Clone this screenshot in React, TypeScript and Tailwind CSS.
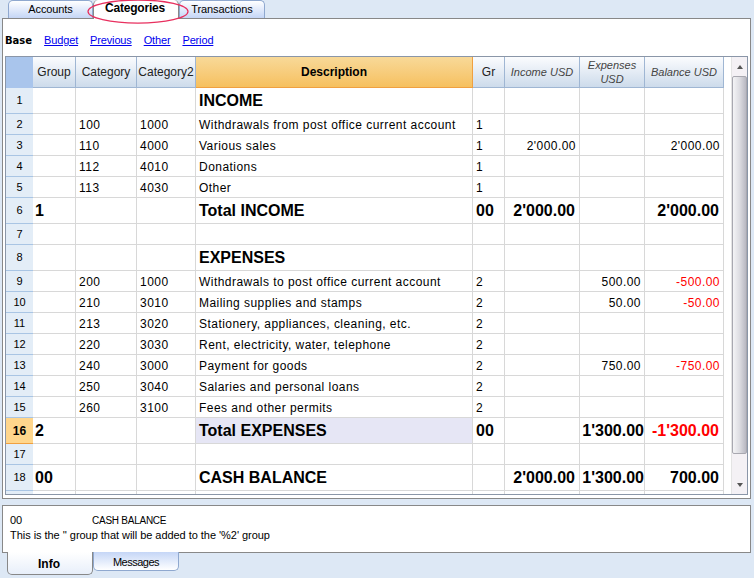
const widths = "w-[43px] w-[61px] w-[59px] w-[277px] w-[32px] w-[75px] w-[65px] w-[79px]".split(" ");

type Row = { n: number; h: string; big?: boolean; cells: string[]; red?: boolean; sel?: boolean };

const rows: Row[] = [
  { n: 1, h: "h-[26px]", big: true, cells: ["", "", "", "INCOME", "", "", "", ""] },
  { n: 2, h: "h-[21px]", cells: ["", "100", "1000", "Withdrawals from post office current account", "1", "", "", ""] },
  { n: 3, h: "h-[21px]", cells: ["", "110", "4000", "Various sales", "1", "2'000.00", "", "2'000.00"] },
  { n: 4, h: "h-[21px]", cells: ["", "112", "4010", "Donations", "1", "", "", ""] },
  { n: 5, h: "h-[21px]", cells: ["", "113", "4030", "Other", "1", "", "", ""] },
  { n: 6, h: "h-[26px]", big: true, cells: ["1", "", "", "Total INCOME", "00", "2'000.00", "", "2'000.00"] },
  { n: 7, h: "h-[21px]", cells: ["", "", "", "", "", "", "", ""] },
  { n: 8, h: "h-[26px]", big: true, cells: ["", "", "", "EXPENSES", "", "", "", ""] },
  { n: 9, h: "h-[21px]", red: true, cells: ["", "200", "1000", "Withdrawals to post office current account", "2", "", "500.00", "-500.00"] },
  { n: 10, h: "h-[21px]", red: true, cells: ["", "210", "3010", "Mailing supplies and stamps", "2", "", "50.00", "-50.00"] },
  { n: 11, h: "h-[21px]", cells: ["", "213", "3020", "Stationery, appliances, cleaning, etc.", "2", "", "", ""] },
  { n: 12, h: "h-[21px]", cells: ["", "220", "3030", "Rent, electricity, water, telephone", "2", "", "", ""] },
  { n: 13, h: "h-[21px]", red: true, cells: ["", "240", "3000", "Payment for goods", "2", "", "750.00", "-750.00"] },
  { n: 14, h: "h-[21px]", cells: ["", "250", "3040", "Salaries and personal loans", "2", "", "", ""] },
  { n: 15, h: "h-[21px]", cells: ["", "260", "3100", "Fees and other permits", "2", "", "", ""] },
  { n: 16, h: "h-[26px]", big: true, red: true, sel: true, cells: ["2", "", "", "Total EXPENSES", "00", "", "1'300.00", "-1'300.00"] },
  { n: 17, h: "h-[21px]", cells: ["", "", "", "", "", "", "", ""] },
  { n: 18, h: "h-[26px]", big: true, cells: ["00", "", "", "CASH BALANCE", "", "2'000.00", "1'300.00", "700.00"] },
];

const headers = ["Group", "Category", "Category2"];

function cellPadding(big: boolean | undefined, i: number) {
  if (!big) return "px-[3px] pt-[2px]";
  if (i === 0) return "pl-[2px] pr-[3px]";
  if (i === 5 || i === 7) return "pl-[3px] pr-[4px]";
  if (i === 6) return "pl-[3px] pr-0";
  return "px-[3px]";
}

function GridRow({ row }: { row: Row }) {
  return (
    <div className={`flex ${row.h}`}>
      <div
        className={`w-[27px] shrink-0 flex items-center justify-center border-b text-[11px] ${
          row.sel ? "bg-[#ffd68c] border-[#f0a040] font-bold text-[12px]" : "bg-[#e3edf7] border-[#a9c5e4]"
        }`}
      >
        {row.n}
      </div>
      {row.cells.map((c, i) => {
        const right = i >= 5;
        return (
          <div
            key={i}
            className={`${widths[i]} shrink-0 flex items-center ${cellPadding(row.big, i)} border-r border-b border-[#d8d8d8] whitespace-nowrap overflow-hidden ${
              right ? "justify-end" : ""
            } ${row.big ? "text-[16px] font-bold" : "text-[12px] tracking-[0.46px]"} ${
              row.red && i === 7 ? "text-[#ff0000]" : ""
            } ${row.sel && i === 3 ? "bg-[#e6e6f5]" : ""}`}
          >
            {c}
          </div>
        );
      })}
    </div>
  );
}

function Scrollbar() {
  return (
    <div className="ml-[7px] w-[17px] flex flex-col bg-[#f4f1f5] border-l border-[#e4e4e4]">
      <div className="h-[19px] flex items-center justify-center">
        <div className="border-x-[3px] border-x-transparent border-b-[4px] border-b-[#555]" />
      </div>
      <div className="h-[378px] rounded-[2px] border border-[#a8a8b0] bg-gradient-to-r from-[#f4f4f6] via-[#dddde2] to-[#b8b8c2]" />
      <div className="flex-1 flex items-end justify-center pb-[7px]">
        <div className="border-x-[3px] border-x-transparent border-t-[4px] border-t-[#555]" />
      </div>
    </div>
  );
}

export default function App() {
  return (
    <div className="relative w-[754px] h-[578px] overflow-hidden bg-[#dde8f5] text-black font-['Liberation_Sans',Arial,sans-serif]">
      {/* top tabs */}
      <div className="flex h-[18px] pl-[8px] text-[11px]">
        <div className="w-[85px] border border-b-0 border-[#8fa8cf] rounded-t-[5px] bg-gradient-to-b from-[#ffffff] to-[#c5d6f6] flex items-center justify-center tracking-[-0.1px]">
          Accounts
        </div>
        <div className="w-[86px] h-[19px] z-10 border-x border-[#888] rounded-t-[5px] bg-white flex items-start justify-center font-bold text-[12px] tracking-[-0.2px] leading-[16px] pr-[2px]">
          Categories
        </div>
        <div className="w-[86px] border border-b-0 border-[#8fa8cf] rounded-t-[5px] bg-gradient-to-b from-[#ffffff] to-[#c5d6f6] flex items-center justify-center tracking-[-0.1px]">
          Transactions
        </div>
      </div>
      <svg className="absolute left-[87px] top-[-3px] z-20" width="103" height="30" viewBox="0 0 103 30">
        <ellipse cx="51" cy="14.5" rx="50" ry="11.5" fill="none" stroke="#e8305f" strokeWidth="1.25" />
      </svg>

      {/* main panel */}
      <div className="ml-[2px] w-[749px] h-[481px] border border-[#888] bg-white pl-[2px] flex flex-col">
        <div className="h-[37px] flex items-center gap-[12px] text-[11px] pt-[5px]">
          <span className="font-bold font-['DejaVu_Sans',sans-serif] text-[10px]">Base</span>
          {["Budget", "Previous", "Other", "Period"].map((l) => (
            <a key={l} href="#" className="text-[#0000ee] underline tracking-[-0.15px]">
              {l}
            </a>
          ))}
        </div>

        <div className="w-[743px] h-[439px] border border-[#8a96a8] flex overflow-hidden">
          <div className="w-[718px] shrink-0">
            {/* header row */}
            <div className="flex h-[31px] text-[12px] text-[#222]">
              <div className="w-[27px] shrink-0 bg-[#a9c5ec]" />
              {headers.map((h, i) => (
                <div
                  key={h}
                  className={`${widths[i]} shrink-0 border-r border-b border-[#9fb6d3] bg-gradient-to-b from-[#fbfcfe] to-[#cddbeb] flex items-center justify-center whitespace-nowrap`}
                >
                  {h}
                </div>
              ))}
              <div className="w-[277px] shrink-0 border-r border-b border-[#f0a040] bg-gradient-to-b from-[#f8d998] to-[#f6c05e] flex items-center justify-center font-bold text-black">
                Description
              </div>
              <div className="w-[32px] shrink-0 border-r border-b border-[#9fb6d3] bg-gradient-to-b from-[#fbfcfe] to-[#cddbeb] flex items-center justify-center">
                Gr
              </div>
              {["Income USD", "Expenses USD", "Balance USD"].map((h, i) => (
                <div
                  key={h}
                  className={`${widths[i + 5]} shrink-0 px-[2px] border-r border-b border-[#9fb6d3] bg-gradient-to-b from-[#fbfcfe] to-[#cddbeb] flex items-center justify-center text-center italic text-[11px] leading-[14px] text-[#444]`}
                >
                  {h}
                </div>
              ))}
            </div>
            {rows.map((r) => (
              <GridRow key={r.n} row={r} />
            ))}
            {/* cut off next row */}
            <div className="flex h-[4px]">
              <div className="w-[27px] shrink-0 bg-[#e3edf7]" />
              {widths.map((w, i) => (
                <div key={i} className={`${w} shrink-0 border-r border-[#d8d8d8]`} />
              ))}
            </div>
          </div>
          <Scrollbar />
        </div>
      </div>

      {/* info panel */}
      <div className="mt-[6px] ml-[2px] w-[749px] h-[48px] border border-[#888] bg-white pt-[7px] pl-[7px] text-[11px] leading-[15px] tracking-[-0.04px]">
        <div className="flex">
          <span className="w-[82px]">00</span>
          <span className="text-[10px] tracking-[-0.25px]">CASH BALANCE</span>
        </div>
        <div>This is the '' group that will be added to the '%2' group</div>
      </div>

      {/* bottom tabs */}
      <div className="flex pl-[7px] text-[12px] -mt-[1px]">
        <div className="relative z-10 w-[86px] h-[23px] pt-[2px] pr-[2px] border border-t-0 border-[#888] rounded-b-[5px] bg-gradient-to-b from-white to-[#e8effa] flex items-center justify-center font-bold">
          Info
        </div>
        <div className="w-[86px] h-[19px] pt-[2px] border border-t-0 border-[#8fa8cf] rounded-b-[5px] bg-gradient-to-b from-[#c5d6f6] to-white flex items-center justify-center text-[11px] tracking-[-0.5px]">
          Messages
        </div>
      </div>
    </div>
  );
}
